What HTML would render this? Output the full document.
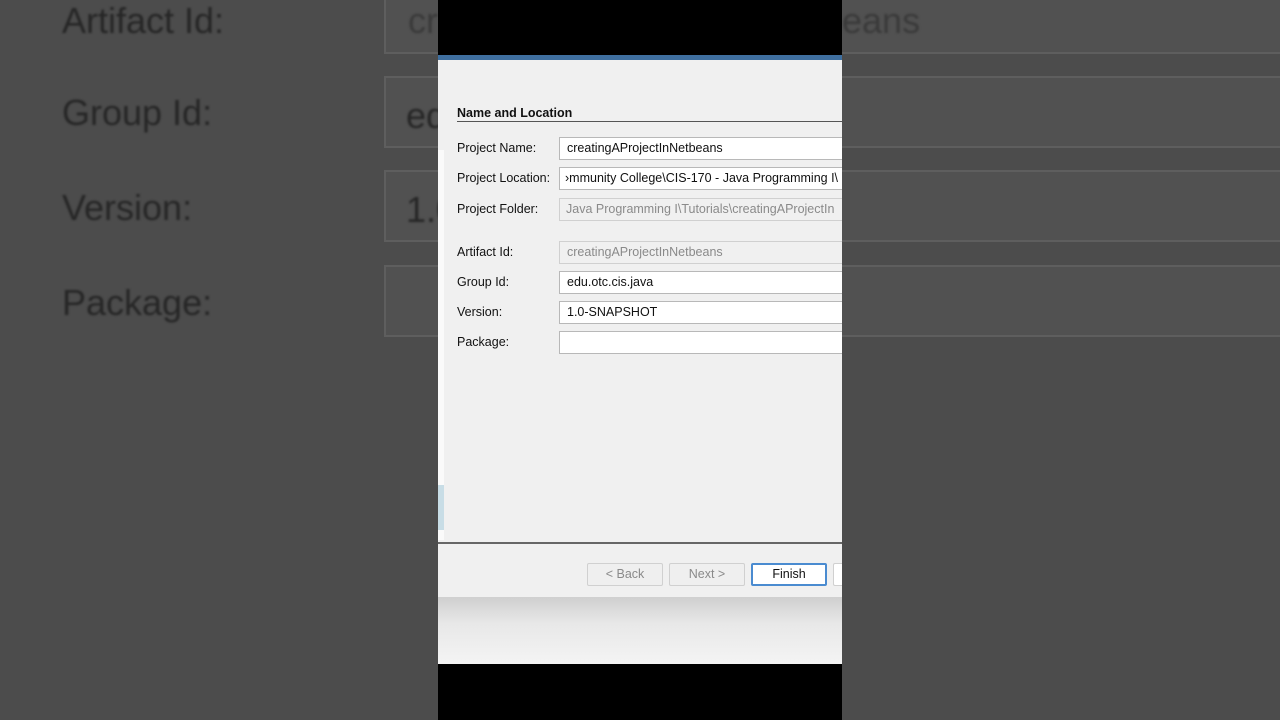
<html><head><style>
body{margin:0;width:1280px;height:720px;background:#4c4c4c;position:relative;overflow:hidden;font-family:"Liberation Sans",sans-serif}
.a{position:absolute}
.bl{color:#262626;font-size:36px;filter:blur(1px)}
.bf{position:absolute;border:2px solid #5e5e5e;background:#515151;height:68px}
.d{font-size:12.5px;color:#111}
.f{position:absolute;left:559px;width:283px;border:1px solid #b8b8b8;border-right:none;background:#fff;font-size:12.5px;line-height:21px;padding-left:7px;box-sizing:border-box;height:23px;white-space:nowrap;overflow:hidden;color:#111}
.f.g{background:#f0f0f0;color:#8a8a8a;border-color:#d0d0d0}
.btn{position:absolute;top:563px;height:23px;width:76px;border:1px solid #d0d0d0;background:#efefef;border-radius:2px;box-sizing:border-box;text-align:center;line-height:21px;font-size:12.5px;color:#8a8a8a}
</style></head><body>
<div class="a bl" style="left:62px;top:0px">Artifact Id:</div>
<div class="a bl" style="left:62px;top:92px">Group Id:</div>
<div class="a bl" style="left:62px;top:187px">Version:</div>
<div class="a bl" style="left:62px;top:282px">Package:</div>
<div class="bf" style="left:384px;top:-20px;width:900px;height:70px"></div>
<div class="bf" style="left:384px;top:76px;width:900px"></div>
<div class="bf" style="left:384px;top:170px;width:900px"></div>
<div class="bf" style="left:384px;top:265px;width:900px"></div>
<div class="a bl" style="left:408px;top:0px;color:#3a3a3a">cr</div>
<div class="a bl" style="left:842px;top:0px;color:#3a3a3a">eans</div>
<div class="a bl" style="left:406px;top:95px">ed</div>
<div class="a bl" style="left:406px;top:189px">1.0</div>

<div class="a" style="left:438px;top:0;width:404px;height:720px;background:#000;overflow:hidden">
<div class="a" style="left:0;top:55px;width:404px;height:5px;background:#3f6f9f"></div>
<div class="a" style="left:0;top:60px;width:404px;height:537px;background:#f0f0f0"></div>
<div class="a" style="left:0;top:150px;width:6px;height:390px;background:#fafafa"></div>
<div class="a" style="left:0;top:485px;width:6px;height:45px;background:#c8dde6"></div>
<div class="a" style="left:0;top:542px;width:404px;height:2px;background:#666"></div>
<div class="a" style="left:0;top:597px;width:404px;height:67px;background:linear-gradient(#cfcfcf,#e8e8e8 40%,#f4f4f4)"></div>
</div>
<div class="a d" style="left:457px;top:106px;font-weight:bold">Name and Location</div>
<div class="a" style="left:457px;top:121px;width:385px;height:1px;background:#555"></div>
<div class="a d" style="left:457px;top:141px">Project Name:</div>
<div class="a d" style="left:457px;top:171px">Project Location:</div>
<div class="a d" style="left:457px;top:202px">Project Folder:</div>
<div class="a d" style="left:457px;top:245px">Artifact Id:</div>
<div class="a d" style="left:457px;top:275px">Group Id:</div>
<div class="a d" style="left:457px;top:305px">Version:</div>
<div class="a d" style="left:457px;top:335px">Package:</div>
<div class="f" style="top:137px">creatingAProjectInNetbeans</div>
<div class="f" style="top:167px;padding-left:5px">›mmunity College\CIS-170 - Java Programming I\</div>
<div class="f g" style="top:198px;padding-left:6px">Java Programming I\Tutorials\creatingAProjectIn</div>
<div class="f g" style="top:241px">creatingAProjectInNetbeans</div>
<div class="f" style="top:271px">edu.otc.cis.java</div>
<div class="f" style="top:301px">1.0-SNAPSHOT</div>
<div class="f" style="top:331px"></div>
<div class="btn" style="left:587px">&lt; Back</div>
<div class="btn" style="left:669px">Next &gt;</div>
<div class="btn" style="left:751px;border:2px solid #4a8bd0;background:#fff;color:#111;line-height:19px">Finish</div>
<div class="btn" style="left:833px;width:9px;background:#fff;border-right:none;border-radius:2px 0 0 2px"></div>
</body></html>
